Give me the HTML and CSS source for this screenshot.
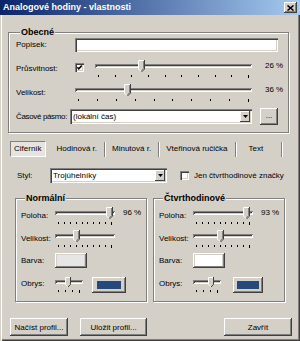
FILE: index.html
```html
<!DOCTYPE html>
<html lang="cs">
<head>
  <meta charset="UTF-8" />
  <title>Analogové hodiny - vlastnosti</title>
  <link rel="stylesheet" href="styles.css">
</head>
<body>

<div class="window">
  <div class="titlebar">
    <span class="title">Analogové hodiny - vlastnosti</span>
    <span class="close-btn">
      <svg width="7" height="6" viewBox="0 0 7 6"><path d="M0.5 0.5l6 5M6.5 0.5l-6 5" stroke="#000" stroke-width="1.6"/></svg>
    </span>
  </div>

  <div class="group group-general">
    <div class="legend">Obecné</div>

    <div class="row row-text">
      <span class="lbl lbl-general">Popisek:</span>
      <span class="field field-caption"></span>
    </div>

    <div class="row row-slider">
      <span class="lbl lbl-general">Průsvitnost:</span>
      <span class="check">
        <svg width="5" height="5" viewBox="0 0 5 5"><path d="M0.3 2.2l1.5 1.6l2.9-3.2" fill="none" stroke="#000" stroke-width="1.5"/></svg>
      </span>
      <div class="slider slider-opacity">
        <div class="track"></div>
        <span class="thumb" style="left:43px">
          <svg width="7" height="13" viewBox="0 0 7 13"><path d="M0 0h7v9l-3.5 3.5L0 9z" fill="#d4d0c8"/><path d="M0.5 9V0.5H6M0.5 9l2.5 2.5" fill="none" stroke="#fff"/><path d="M6.5 0v9l-3 3" fill="none" stroke="#404040"/><path d="M5.5 1v7.6l-2.2 2.2" fill="none" stroke="#808080"/></svg>
        </span>
        <div class="ticks"><i></i><i></i><i></i><i></i><i></i><i></i><i></i><i></i><i></i><i></i></div>
      </div>
      <span class="pct pct-general">26 %</span>
    </div>

    <div class="row row-slider">
      <span class="lbl lbl-general">Velikost:</span>
      <div class="slider slider-size">
        <div class="track"></div>
        <span class="thumb" style="left:49px">
          <svg width="7" height="13" viewBox="0 0 7 13"><path d="M0 0h7v9l-3.5 3.5L0 9z" fill="#d4d0c8"/><path d="M0.5 9V0.5H6M0.5 9l2.5 2.5" fill="none" stroke="#fff"/><path d="M6.5 0v9l-3 3" fill="none" stroke="#404040"/><path d="M5.5 1v7.6l-2.2 2.2" fill="none" stroke="#808080"/></svg>
        </span>
        <div class="ticks"><i></i><i></i><i></i><i></i><i></i><i></i><i></i><i></i><i></i><i></i></div>
      </div>
      <span class="pct pct-general">36 %</span>
    </div>

    <div class="row row-zone">
      <span class="lbl lbl-zone">Časové pásmo:</span>
      <div class="select select-zone">
        <span class="select-text">(lokální čas)</span>
        <span class="select-btn"><svg width="5" height="3" viewBox="0 0 5 3"><path d="M0 0h5L2.5 3z"/></svg></span>
      </div>
      <span class="btn btn-more">...</span>
    </div>
  </div>

  <div class="tabs">
    <span class="tab tab-active">Ciferník</span>
    <span class="tab-sep tab-sep-hidden"></span>
    <span class="tab">Hodinová r.</span>
    <span class="tab-sep"></span>
    <span class="tab">Minutová r.</span>
    <span class="tab-sep"></span>
    <span class="tab">Vteřinová ručička</span>
    <span class="tab-sep"></span>
    <span class="tab tab-last">Text</span>
    <span class="tab-sep"></span>
  </div>

  <div class="row row-style">
    <span class="lbl lbl-style">Styl:</span>
    <div class="select select-style">
      <span class="select-text">Trojúhelníky</span>
      <span class="select-btn"><svg width="5" height="3" viewBox="0 0 5 3"><path d="M0 0h5L2.5 3z"/></svg></span>
    </div>
    <span class="check check-empty"></span>
    <span class="check-label">Jen čtvrthodinové značky</span>
  </div>

  <div class="panes">
    <div class="group pane">
      <div class="legend">Normální</div>
      <div class="row row-slider">
        <span class="lbl lbl-pane">Poloha:</span>
        <div class="slider slider-pane">
          <div class="track"></div>
          <span class="thumb" style="left:51px">
            <svg width="7" height="13" viewBox="0 0 7 13"><path d="M0 0h7v9l-3.5 3.5L0 9z" fill="#d4d0c8"/><path d="M0.5 9V0.5H6M0.5 9l2.5 2.5" fill="none" stroke="#fff"/><path d="M6.5 0v9l-3 3" fill="none" stroke="#404040"/><path d="M5.5 1v7.6l-2.2 2.2" fill="none" stroke="#808080"/></svg>
          </span>
          <div class="ticks"><i></i><i></i><i></i><i></i><i></i><i></i><i></i><i></i><i></i><i></i></div>
        </div>
        <span class="pct pct-pane">96 %</span>
      </div>
      <div class="row row-slider">
        <span class="lbl lbl-pane">Velikost:</span>
        <div class="slider slider-pane">
          <div class="track"></div>
          <span class="thumb" style="left:18px">
            <svg width="7" height="13" viewBox="0 0 7 13"><path d="M0 0h7v9l-3.5 3.5L0 9z" fill="#d4d0c8"/><path d="M0.5 9V0.5H6M0.5 9l2.5 2.5" fill="none" stroke="#fff"/><path d="M6.5 0v9l-3 3" fill="none" stroke="#404040"/><path d="M5.5 1v7.6l-2.2 2.2" fill="none" stroke="#808080"/></svg>
          </span>
          <div class="ticks"><i></i><i></i><i></i><i></i><i></i><i></i><i></i><i></i><i></i><i></i></div>
        </div>
      </div>
      <div class="row row-color">
        <span class="lbl lbl-pane">Barva:</span>
        <span class="colorbox"><span class="colorbox-fill fill-light"></span></span>
      </div>
      <div class="row row-outline">
        <span class="lbl lbl-pane">Obrys:</span>
        <div class="slider slider-small">
          <div class="track"></div>
          <span class="thumb thumb-small" style="left:10px">
            <svg width="6" height="11" viewBox="0 0 6 11"><path d="M0 0h6v7.5l-3 3L0 7.5z" fill="#d4d0c8"/><path d="M0.5 7.5V0.5H5M0.5 7.5l2 2" fill="none" stroke="#fff"/><path d="M5.5 0v7.5l-2.5 2.5" fill="none" stroke="#404040"/></svg>
          </span>
          <div class="ticks"><i></i><i></i><i></i><i></i></div>
        </div>
        <span class="swatch"><span class="swatch-fill"></span></span>
      </div>
    </div>

    <div class="group pane">
      <div class="legend">Čtvrthodinové</div>
      <div class="row row-slider">
        <span class="lbl lbl-pane">Poloha:</span>
        <div class="slider slider-pane">
          <div class="track"></div>
          <span class="thumb" style="left:50px">
            <svg width="7" height="13" viewBox="0 0 7 13"><path d="M0 0h7v9l-3.5 3.5L0 9z" fill="#d4d0c8"/><path d="M0.5 9V0.5H6M0.5 9l2.5 2.5" fill="none" stroke="#fff"/><path d="M6.5 0v9l-3 3" fill="none" stroke="#404040"/><path d="M5.5 1v7.6l-2.2 2.2" fill="none" stroke="#808080"/></svg>
          </span>
          <div class="ticks"><i></i><i></i><i></i><i></i><i></i><i></i><i></i><i></i><i></i><i></i></div>
        </div>
        <span class="pct pct-pane">93 %</span>
      </div>
      <div class="row row-slider">
        <span class="lbl lbl-pane">Velikost:</span>
        <div class="slider slider-pane">
          <div class="track"></div>
          <span class="thumb" style="left:24px">
            <svg width="7" height="13" viewBox="0 0 7 13"><path d="M0 0h7v9l-3.5 3.5L0 9z" fill="#d4d0c8"/><path d="M0.5 9V0.5H6M0.5 9l2.5 2.5" fill="none" stroke="#fff"/><path d="M6.5 0v9l-3 3" fill="none" stroke="#404040"/><path d="M5.5 1v7.6l-2.2 2.2" fill="none" stroke="#808080"/></svg>
          </span>
          <div class="ticks"><i></i><i></i><i></i><i></i><i></i><i></i><i></i><i></i><i></i><i></i></div>
        </div>
      </div>
      <div class="row row-color">
        <span class="lbl lbl-pane">Barva:</span>
        <span class="colorbox"><span class="colorbox-fill fill-white"></span></span>
      </div>
      <div class="row row-outline">
        <span class="lbl lbl-pane">Obrys:</span>
        <div class="slider slider-small">
          <div class="track"></div>
          <span class="thumb thumb-small" style="left:15px">
            <svg width="6" height="11" viewBox="0 0 6 11"><path d="M0 0h6v7.5l-3 3L0 7.5z" fill="#d4d0c8"/><path d="M0.5 7.5V0.5H5M0.5 7.5l2 2" fill="none" stroke="#fff"/><path d="M5.5 0v7.5l-2.5 2.5" fill="none" stroke="#404040"/></svg>
          </span>
          <div class="ticks"><i></i><i></i><i></i><i></i></div>
        </div>
        <span class="swatch swatch-right"><span class="swatch-fill"></span></span>
      </div>
    </div>
  </div>

  <div class="actions">
    <span class="btn btn-load">Načíst profil...</span>
    <span class="btn btn-save">Uložit profil...</span>
    <span class="btn btn-close">Zavřít</span>
  </div>
</div>

</body>
</html>
```

FILE: styles.css
```css
body {
  margin: 0;
  font-family: "Liberation Sans", Arial, sans-serif;
  font-size: 8px;
  color: #000;
  background: #d4d0c8;
}

.window {
  width: 300px;
  height: 341px;
  box-sizing: border-box;
  overflow: hidden;
  background: #d4d0c8;
  box-shadow: inset 1px 0 #d4d0c8, inset 2px 0 #fff,
              inset -1px -1px #404040, inset -2px -2px #808080;
}

/* title bar */
.titlebar {
  height: 15px;
  display: flex;
  align-items: center;
  justify-content: space-between;
  padding: 0 3px;
  background: linear-gradient(to right, #0a246a, #a6caf0);
}

.title {
  color: #fff;
  font-weight: bold;
  font-size: 9px;
  line-height: 15px;
  white-space: nowrap;
}

.close-btn {
  width: 13px;
  height: 11px;
  display: flex;
  align-items: center;
  justify-content: center;
  background: #d4d0c8;
  box-shadow: inset -1px -1px #404040, inset 1px 1px #fff, inset -2px -2px #808080;
}

/* group boxes */
.group {
  border: 1px solid #808080;
  box-shadow: inset 1px 1px #fff, 1px 1px #fff;
  box-sizing: border-box;
}

.legend {
  display: block;
  width: max-content;
  margin: -6px 0 0 4px;
  padding: 0 1px;
  background: #d4d0c8;
  font-weight: bold;
  font-size: 9px;
  line-height: 11px;
}

.group-general {
  width: 281px;
  margin: 17px 0 0 8px;
  padding: 0 0 7px 7px;
}

.row {
  display: flex;
  align-items: flex-start;
}

.lbl {
  flex: none;
  line-height: 12px;
  white-space: nowrap;
}

.row-slider .lbl,
.row-slider .lbl + .check {
  margin-top: 3px;
}

.lbl-general { width: 59px; }
.lbl-zone { width: 54px; letter-spacing: -0.35px; }
.lbl-style { width: 33px; }
.lbl-pane { width: 34px; }

.row-text {
  height: 14px;
  align-items: center;
}

.row-slider {
  height: 20px;
  margin-top: 8px;
}

.row-slider + .row-slider {
  margin-top: 4px;
}

.row-zone {
  height: 17px;
  margin-top: 4px;
  align-items: center;
}

/* sunken fields */
.field,
.select,
.check {
  background: #fff;
  box-shadow: inset 1px 1px #808080, inset 2px 2px #404040,
              inset -1px -1px #fff, inset -2px -2px #d4d0c8;
}

.field-caption {
  width: 203px;
  height: 14px;
}

.check {
  flex: none;
  width: 9px;
  height: 9px;
  margin-top: 4px;
  margin-right: 11px;
  display: flex;
  align-items: center;
  justify-content: center;
}

.select {
  display: flex;
  height: 15px;
  box-sizing: border-box;
  padding: 2px;
}

.select-text {
  flex: 1;
  padding-left: 1px;
  line-height: 11px;
  white-space: nowrap;
}

.select-btn {
  width: 10px;
  display: flex;
  align-items: center;
  justify-content: center;
  background: #d4d0c8;
  box-shadow: inset -1px -1px #404040, inset 1px 1px #fff;
}

.select-zone { width: 182px; }
.select-style { width: 117px; }

/* raised buttons */
.btn {
  display: flex;
  align-items: center;
  justify-content: center;
  box-sizing: border-box;
  background: #d4d0c8;
  white-space: nowrap;
  box-shadow: inset -1px -1px #404040, inset 1px 1px #fff, inset -2px -2px #808080;
}

.btn-more {
  width: 18px;
  height: 17px;
  margin-left: 8px;
  padding-bottom: 3px;
}

/* sliders */
.slider {
  position: relative;
  flex: none;
  height: 20px;
}

.slider-opacity { width: 157px; }
.slider-size { width: 177px; }
.slider-pane { width: 60px; }
.slider-small { width: 28px; height: 17px; }

.track {
  height: 4px;
  margin-top: 4px;
  background: #d4d0c8;
  box-shadow: inset 1px 1px #808080, inset -1px -1px #fff, inset 2px 2px #404040;
}

.thumb {
  position: absolute;
  top: 0;
  line-height: 0;
}

.thumb-small { top: 1px; }

.ticks {
  display: flex;
  justify-content: space-between;
  margin: 7px 3px 0;
}

.ticks i {
  width: 1px;
  height: 2px;
  background: #000;
}

.ticks i:last-child {
  height: 3px;
}

.slider-small .track { margin-top: 4px; }
.slider-small .ticks { margin-top: 6px; }

.pct {
  line-height: 12px;
  white-space: nowrap;
}

.pct-general { margin-left: 13px; }
.pct-pane { margin-left: 8px; }

/* tabs */
.tabs {
  display: flex;
  align-items: center;
  height: 16px;
  margin-top: 8px;
  padding-left: 10px;
}

.tab {
  height: 16px;
  box-sizing: border-box;
  padding: 0 3px;
  border: 1px solid transparent;
  line-height: 14px;
  white-space: nowrap;
}

.tab-active {
  border-color: #808080 #fff #fff #808080;
  background: #e6e4df;
}

.tab-last {
  padding: 0 14px 0 9px;
}

.tab-sep {
  width: 1px;
  height: 15px;
  margin: 0 3px;
  background: #808080;
  box-shadow: 1px 0 #fff;
}

.tab-sep-hidden {
  visibility: hidden;
}

/* style row */
.row-style {
  height: 15px;
  margin-top: 11px;
  padding-left: 17px;
  align-items: center;
}

.check-empty {
  margin: 0 0 0 13px;
}

.check-label {
  margin-left: 5px;
  white-space: nowrap;
}

/* panes */
.panes {
  display: flex;
  gap: 6px;
  margin-top: 15px;
  padding-left: 15px;
}

.pane {
  width: 132px;
  height: 104px;
  padding-left: 5px;
}

.pane .row-slider {
  margin-top: 3px;
}

.row-color {
  height: 15px;
  margin-top: 3px;
  align-items: center;
}

.row-outline {
  height: 17px;
  margin-top: 8px;
}

.row-outline .lbl {
  margin-top: 2px;
}

.colorbox {
  width: 32px;
  height: 15px;
  box-sizing: border-box;
  padding: 2px;
  background: #d4d0c8;
  box-shadow: inset -1px -1px #404040, inset 1px 1px #fff, inset -2px -2px #808080;
}

.colorbox-fill {
  display: block;
  height: 100%;
  width: calc(100% - 1px);
}

.fill-light { background: #e6e6e6; }
.fill-white { background: #fff; }

.swatch {
  width: 34px;
  height: 16px;
  margin: 1px 0 0 9px;
  box-sizing: border-box;
  padding: 4px 5px;
  background: #d4d0c8;
  box-shadow: inset -1px -1px #404040, inset 1px 1px #fff, inset -2px -2px #808080;
}

.swatch-right {
  width: 30px;
  margin-left: 12px;
  padding: 4px 4px;
}

.swatch-fill {
  display: block;
  height: 100%;
  background: #27497a;
}

/* bottom buttons */
.actions {
  display: flex;
  margin-top: 16px;
  padding: 0 8px 0 10px;
}

.actions .btn {
  height: 18px;
}

.btn-load { width: 58px; }
.btn-save { width: 67px; margin-left: 12px; }
.btn-close { width: 68px; margin-left: auto; }
```
